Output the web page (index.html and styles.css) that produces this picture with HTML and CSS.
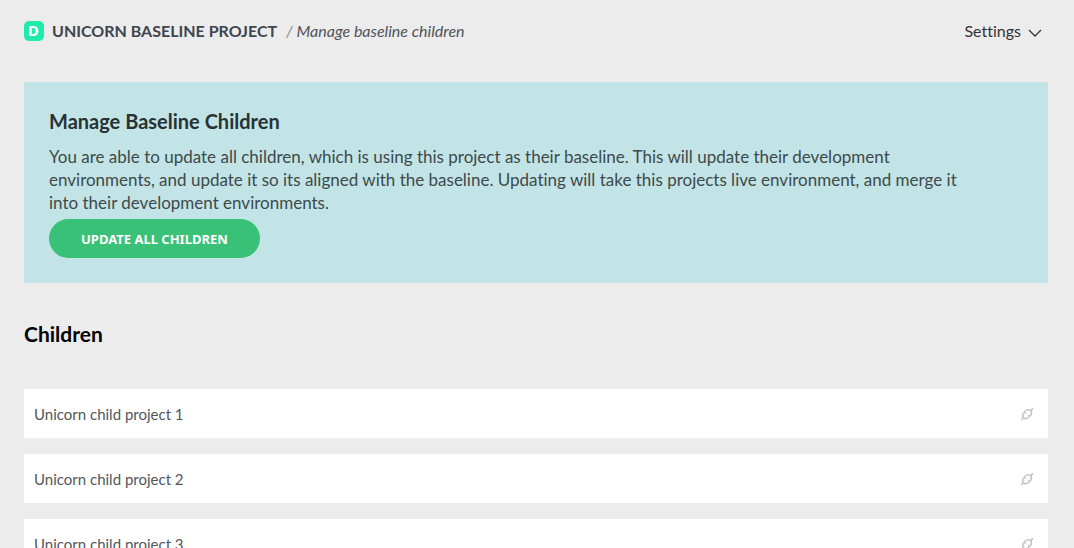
FILE: index.html
```html
<!DOCTYPE html>
<html lang="en">
<head>
<meta charset="utf-8">
<meta name="viewport" content="width=device-width, initial-scale=1">
<title>Manage baseline children</title>
<link rel="stylesheet" href="styles.css">
</head>
<body>
<svg class="sprite" aria-hidden="true">
  <symbol id="plug" viewBox="0 0 14 14">
    <g fill="none" stroke="currentColor" stroke-width="1.5">
      <path d="M3.800 5.400C5.200 3.200 8 2.200 10 3.200L11.200 4.400C11.900 6.200 10.900 8.300 9.500 9.500"/>
      <path d="M3.600 5.800C2.500 7.600 2.400 9.400 3.200 10.600L4.400 11.500C6.200 12 8.100 11.100 9.300 9.800"/>
      <path d="M1.200 13l2.200-2.200M13 1.400l-2.200 2.200"/>
      <path d="M4 5.200l2 1.600M9.900 9.600l-1.900-1.600" stroke-width="1.200"/>
    </g>
  </symbol>
</svg>
<header class="topbar">
  <div class="crumbs">
    <svg class="logo" viewBox="0 0 20 20" aria-hidden="true">
      <rect width="20" height="20" rx="5" fill="#20eaac"/>
      <path d="M5 5h4.200c3.200 0 5.200 1.800 5.200 5s-2 5-5.200 5H5zM7.700 7v6h1.500c1.600 0 2.500-1 2.500-3s-.9-3-2.500-3z" fill="#fff" fill-rule="evenodd"/>
    </svg>
    <a class="project" href="#">UNICORN BASELINE PROJECT</a>
    <span class="page"><span class="slash">/</span> Manage baseline children</span>
  </div>
  <button class="settings" type="button">Settings
    <svg class="chevron" viewBox="0 0 14 8" aria-hidden="true"><path d="M1 1l6 6 6-6" fill="none" stroke="currentColor" stroke-width="1.3"/></svg>
  </button>
</header>
<main class="content">
  <section class="notice">
    <h1 class="notice-title">Manage Baseline Children</h1>
    <p class="notice-text">You are able to update all children, which is using this project as their baseline. This will update their development environments, and update it so its aligned with the baseline. Updating will take this projects live environment, and merge it into their development environments.</p>
    <button class="update" type="button">UPDATE ALL CHILDREN</button>
  </section>
  <h2 class="heading">Children</h2>
  <ul class="children">
    <li class="child"><span>Unicorn child project 1</span><svg class="plug" aria-hidden="true"><use href="#plug"/></svg></li>
    <li class="child"><span>Unicorn child project 2</span><svg class="plug" aria-hidden="true"><use href="#plug"/></svg></li>
    <li class="child"><span>Unicorn child project 3</span><svg class="plug" aria-hidden="true"><use href="#plug"/></svg></li>
  </ul>
</main>
</body>
</html>
```
FILE: styles.css
```css
* { box-sizing: border-box; }
body { margin: 0; background: #ececec; color: #52565b; font: 16px/24px Lato, "Noto Sans", sans-serif; font-variant-ligatures: none; }
.sprite { display: none; }
.topbar { display: flex; align-items: center; justify-content: space-between; height: 62px; padding: 0 32px 0 24px; }
.crumbs { display: flex; align-items: center; }
.logo { width: 20px; height: 20px; margin-right: 8px; }
.project { color: #40454c; font-weight: 700; text-decoration: none; margin-right: 9px; }
.page { color: #505459; font-style: italic; }
.slash { color: #85888b; }
.settings { display: flex; align-items: center; gap: 7px; padding: 0; border: 0; background: none; color: #333; font: inherit; font-variant-ligatures: none; }
.chevron { width: 14px; height: 8px; margin-top: 4px; }
.content { padding: 20px 26px 24px 24px; }
.notice { padding: 25px; background: #c2e4e6; }
.notice-title { margin: 0 0 10px; color: #283234; font-size: 20px; line-height: 28px; }
.notice-text { max-width: 924px; margin: 0; color: #3e494b; font-size: 17px; line-height: 23px; }
.update { display: block; margin-top: 5px; height: 39px; padding: 0 32px; border: 0; border-radius: 20px; background: #38c177; color: #fff; font: 700 13px/20px "Noto Sans", sans-serif; }
.heading { margin: 36px 0 40px; color: #000; font-size: 21px; line-height: 30px; }
.children { display: grid; gap: 16px; margin: 0; padding: 0; list-style: none; font-size: 15px; }
.child { display: flex; align-items: center; justify-content: space-between; min-height: 49px; padding: 0 14px 0 10px; background: #fff; }
.plug { width: 14px; height: 14px; color: #c4c4c6; }
```
